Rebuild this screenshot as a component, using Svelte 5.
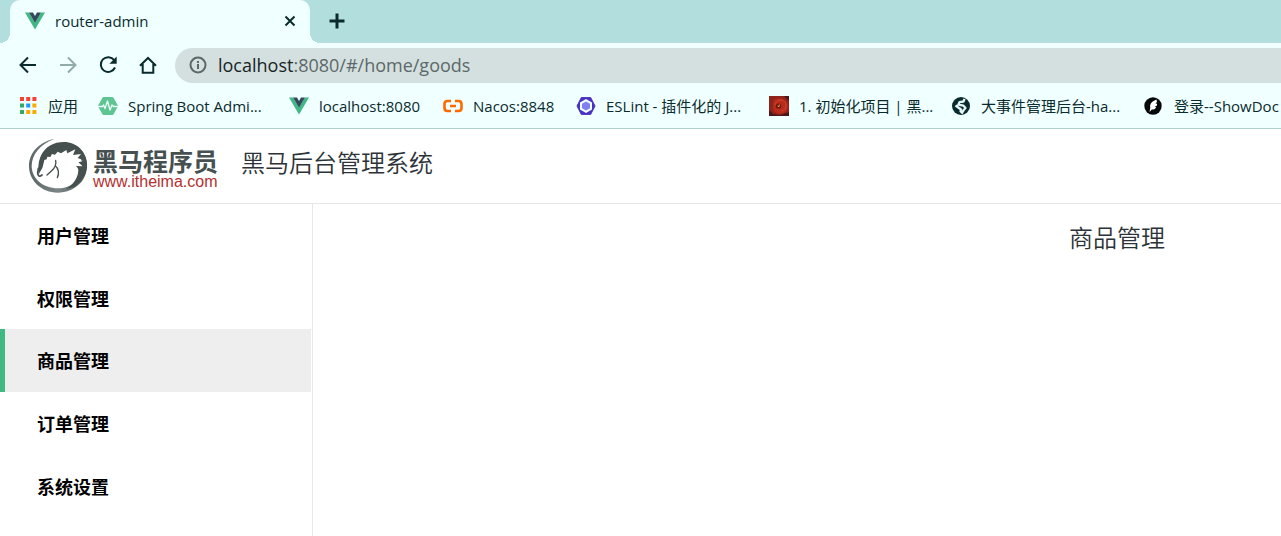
<script>
  const bookmarks = [
    { icon: 'apps', label: '应用' },
    { icon: 'pulse', label: 'Spring Boot Admi...' },
    { icon: 'vue', label: 'localhost:8080' },
    { icon: 'nacos', label: 'Nacos:8848' },
    { icon: 'eslint', label: 'ESLint - 插件化的 J...' },
    { icon: 'flower', label: '1. 初始化项目 | 黑...' },
    { icon: 'globe', label: '大事件管理后台-ha...' },
    { icon: 'doc', label: '登录--ShowDoc' }
  ];
  const dots = ['#f44336', '#f44336', '#f44336', '#34a862', '#2196f3', '#f9ab00', '#34a862', '#f9ab00', '#f9ab00'];
  const menu = ['用户管理', '权限管理', '商品管理', '订单管理', '系统设置'];
  let active = $state(2);
</script>

{#snippet vue()}
  <svg class="icon" viewBox="0 0 20 20" aria-hidden="true">
    <path fill="#41b883" d="M0 1.500h4l6 10 6-10h4L10 18.500z" />
    <path fill="#35495e" d="M4 1.500h4l2 3.500 2-3.500h4l-6 10.300z" />
  </svg>
{/snippet}

<div class="browser">
  <div class="tabs">
    <div class="tab">
      {@render vue()}
      <span class="tab-title">router-admin</span>
      <button class="close" aria-label="Close tab">
        <svg width="12" height="12" viewBox="0 0 12 12"><path d="M1.500 1.500l9 9m0-9l-9 9" /></svg>
      </button>
    </div>
    <button class="plus" aria-label="New tab">
      <svg width="16" height="16" viewBox="0 0 16 16"><path d="M8 .5v15M.5 8h15" /></svg>
    </button>
  </div>

  <div class="toolbar">
    <button aria-label="Back"><svg width="20" height="20" viewBox="0 0 20 20"><path d="M18 10H3M10 2.500L2.500 10l7.500 7.500" /></svg></button>
    <button class="dim" aria-label="Forward"><svg width="20" height="20" viewBox="0 0 20 20"><path d="M2 10h15M10 2.500l7.500 7.500-7.500 7.500" /></svg></button>
    <button aria-label="Reload"><svg width="20" height="20" viewBox="0 0 20 20"><path d="M16.200 5.200A7.400 7.400 0 1 0 17 12.500" /><path class="solid" d="M18.700 1.500v7.300h-7.300z" /></svg></button>
    <button aria-label="Home"><svg width="20" height="20" viewBox="0 0 20 20"><path d="M2 10.800L10 3l8 7.800M4.700 9v8.700h10.600V9" /></svg></button>
    <div class="address">
      <svg class="info" width="18" height="18" viewBox="0 0 18 18" aria-hidden="true"><circle cx="9" cy="9" r="7.500" /><path d="M9 8v5M9 5v2" /></svg>
      <a class="url" href="#/home/goods"><b>localhost</b>:8080/#/home/goods</a>
    </div>
  </div>

  <nav class="bookmarks" aria-label="Bookmarks">
    {#each bookmarks as mark}
      <a href="#/home/goods">
        {#if mark.icon === 'vue'}
          {@render vue()}
        {:else}
          <svg class="icon" viewBox="0 0 20 20" aria-hidden="true">
            {#if mark.icon === 'apps'}
              {#each dots as fill, i}
                <rect x={2 + (i % 3) * 6.2} y={1 + Math.floor(i / 3) * 6.5} width="4" height="4" {fill} />
              {/each}
            {:else if mark.icon === 'pulse'}
              <path fill="#5ec592" stroke="#5ec592" stroke-width="2" stroke-linejoin="round" d="M5.500 2h9L19 10 14.500 18h-9L1 10z" />
              <path fill="none" stroke="#f0ffff" stroke-width="1.300" stroke-linejoin="round" d="M0 10.500h4.500l1-1.500 1.500 3.500L9.500 5l2.500 9 2-5 1.500 1.500H20" />
            {:else if mark.icon === 'nacos'}
              <path fill="none" stroke="#ff6a00" stroke-width="2.600" d="M8 5H4.500Q1.500 5 1.500 8v4q0 3 3 3H8M12 5h3.500q3 0 3 3v4q0 3-3 3H12M7 10h6" />
            {:else if mark.icon === 'eslint'}
              <path fill="#4b32c3" stroke="#4b32c3" stroke-linejoin="round" d="M5.300 1.600h9.400L19 10l-4.300 8.400H5.300L1 10z" />
              <path fill="#f0ffff" d="M10 3l6 3.500v7L10 17l-6-3.500v-7z" />
              <path fill="#8080f2" d="M10 5.400l4 2.300v4.600l-4 2.300-4-2.300V7.700z" />
            {:else if mark.icon === 'flower'}
              <path fill="#8e241b" d="M0 0h20v20H0z" />
              <path fill="#4a171a" d="M0 14l4 4 7 1 9-3v4H0zM15 0h5v5z" />
              <path fill="#b82b1c" d="M5 4q4-3 9-1 5 2 5 8-1 6-7 7-6 0-8-5-1-5 1-9z" />
              <path fill="none" stroke="#d4442b" d="M6 9q1-5 6-5 5 1 5 6-1 5-5 5" />
              <circle cx="9.500" cy="10" r="2.600" fill="#6a140f" />
              <path fill="none" stroke="#efa451" d="M8.500 10l1.500.8.3-2.300" />
            {:else if mark.icon === 'globe'}
              <circle cx="10" cy="10" r="9" fill="#0a2b2d" />
              <path fill="none" stroke="#e6f5f5" stroke-width="2.300" stroke-linejoin="round" d="M13.500 2.800l-1 2.700-4 .7-1.200 2.500 5.200 1 2 2.300-2 2.300-1.500 2.500-1.500-1.500.5-1.800-5.500-4" />
            {:else}
              <circle cx="9" cy="10" r="8.700" fill="#050708" />
              <path fill="#fff" d="M12.500 3.500C8 5 5.500 8 6.300 11.500L5.500 16l2.300-2.500c2 .4 3.500-.5 4.500-2.500l-1.800-.3 2.500-1.200V7.800l-1.500-.3 1.500-1.500z" />
            {/if}
          </svg>
        {/if}
        <span>{mark.label}</span>
      </a>
    {/each}
  </nav>
</div>

<header>
  <div class="logo">
    <svg width="60" height="56" viewBox="25 9 180 168" aria-hidden="true">
      <defs>
        <linearGradient id="ring" x1="0" y1="0" x2="1" y2="0">
          <stop offset="0" stop-color="#5d6666" /><stop offset=".5" stop-color="#7c8585" /><stop offset="1" stop-color="#515b5b" />
        </linearGradient>
      </defs>
      <path fill="url(#ring)" d="M104 12C60 20 28 52 28 94c0 44 38 79 86 79 50 0 88-36 88-80 0-12-3-24-8-33l-14 4c6 10 8 20 8 31 0 36-32 65-74 65-43 0-77-28-78-66 0-34 24-66 68-82z" />
      <path fill="#46504f" d="M62 66C75 34 103 21 133 21c38 0 69 30 69 67 0 30-16 54-38 68l-26 6c24-14 38-35 38-58l-2-5-5-6 20 1-13-12 20-5-22-8 10-12-24 3 7-17-24 12-3-10-16 10-10-5-8 9-9-2-5 9-9-1-2 8-7 2-2 9-4 15-9 15-2 12C55 103 55 84 62 66z" />
      <g fill="none" stroke="#46504f" stroke-linecap="round">
        <path stroke-width="5" d="M56 100l-2 14c0 10 6 12 13 6" />
        <path stroke-width="4" d="M108 76c3 14-2 22-12 31l-14 13M107 92c10 8 12 24 6 36" />
      </g>
    </svg>
    <div class="wordmark"><strong>黑马程序员</strong><span>www.itheima.com</span></div>
  </div>
  <h1>黑马后台管理系统</h1>
</header>

<div class="page">
  <nav class="side" aria-label="Main menu">
    {#each menu as label, i}
      <button class:active={active === i} onclick={() => (active = i)}>{label}</button>
    {/each}
  </nav>
  <main><h2>{menu[active]}</h2></main>
</div>

<style>
  :global(body) { margin: 0; overflow-x: hidden; background: #fff; }
  :global(#app) { min-height: 100vh; display: flex; flex-direction: column; font-family: "Open Sans", "Noto Sans CJK SC", sans-serif; }
  button { border: 0; padding: 0; background: none; font: inherit; color: inherit; cursor: pointer; }
  a { color: inherit; text-decoration: none; }
  svg { display: block; flex: none; }
  .browser { background: #f0ffff; color: #0a2b2d; border-bottom: 1px solid #afcdca; }
  .icon { width: 20px; height: 20px; }
  .tabs { display: flex; height: 43px; padding-left: 10px; background: #b2dfdd; }
  .tab { position: relative; display: flex; align-items: center; box-sizing: border-box; width: 300px; padding: 0 14px 2px 15px; gap: 10px; background: #f0ffff; border-radius: 10px 10px 0 0; }
  .tab::before, .tab::after { content: ""; position: absolute; bottom: 0; width: 10px; height: 10px; }
  .tab::before { right: 100%; background: radial-gradient(circle at 0 0, transparent 10px, #f0ffff 10px); }
  .tab::after { left: 100%; background: radial-gradient(circle at 100% 0, transparent 10px, #f0ffff 10px); }
  .tab-title { flex: 1; font-size: 15px; }
  .close svg, .plus svg { fill: none; stroke: #0a2b2d; stroke-width: 2; }
  .plus { padding: 0 19px 2px; }
  .plus svg { stroke-width: 3; }
  .toolbar { display: flex; align-items: center; height: 44px; padding-left: 18px; gap: 20px; }
  .toolbar svg { fill: none; stroke: #0a2b2d; stroke-width: 2; }
  .toolbar .solid { fill: #0a2b2d; stroke: none; }
  .toolbar .dim svg { stroke: #91aaaa; }
  .address { flex: 1; display: flex; align-items: center; gap: 11px; height: 35px; margin-left: -3px; padding-left: 14px; background: #d4e0e0; border-radius: 18px 0 0 18px; }
  .address .info { stroke: #5c6868; }
  .url { font-size: 18px; color: #5c6868; }
  .url b { font-weight: 400; color: #182424; }
  .bookmarks { display: grid; grid-template-columns: 80px 191px 154px 133px 193px 182px 193px max-content; align-items: center; height: 37px; padding: 0 0 4px 18px; overflow: hidden; font-size: 15px; line-height: 24px; white-space: nowrap; }
  .bookmarks a { display: flex; align-items: center; gap: 10px; }
  header { display: flex; align-items: center; height: 74px; padding: 0 28px; gap: 23px; border-bottom: 1px solid #e7e7e7; }
  .logo { display: flex; align-items: center; gap: 5px; }
  .wordmark { display: flex; flex-direction: column; padding-top: 4px; font-size: 16px; line-height: 16px; color: #b5302f; font-family: "Liberation Sans", sans-serif; }
  .wordmark strong { font: 700 25px/28px "Noto Sans CJK SC", sans-serif; color: #465050; }
  h1, h2 { margin: 0; font-size: 24px; line-height: 36px; font-weight: 350; color: #2c3338; }
  h1 { padding-bottom: 6px; }
  .page { display: flex; flex: 1; }
  .side { display: grid; grid-auto-rows: 1fr; align-self: stretch; height: 313px; box-sizing: border-box; width: 312px; padding-right: 1px; }
  .side button { padding: 0 0 0 32px; border-left: 5px solid transparent; text-align: left; font-size: 18px; font-weight: 700; color: #000; }
  .side .active { background: #eee; border-left-color: #42b983; }
  main { flex: 1; padding: 16px 116px 0 24px; border-left: 1px solid #e7e7e7; text-align: right; }
</style>
